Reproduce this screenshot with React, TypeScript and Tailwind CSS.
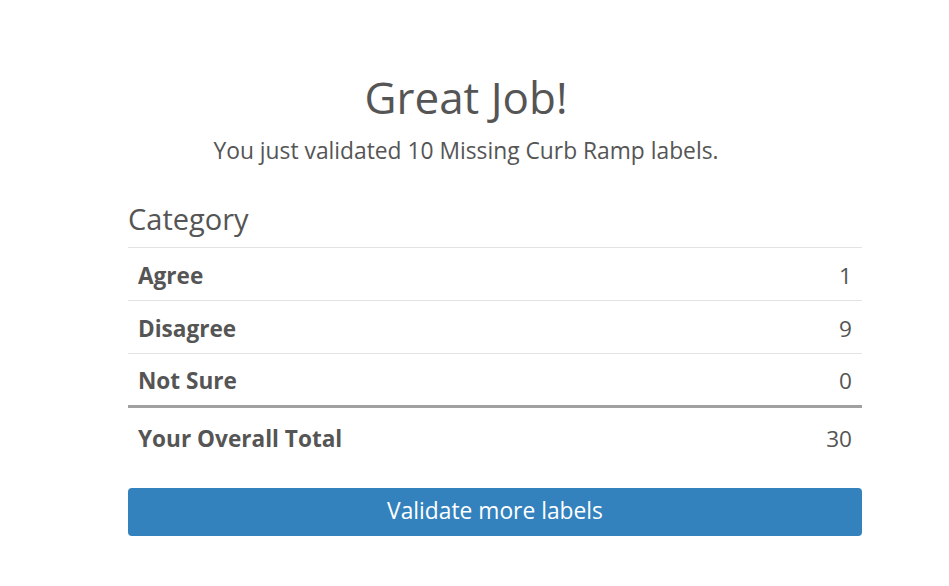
export default function App() {
  const rows = [
    { label: "Agree", value: 1 },
    { label: "Disagree", value: 9 },
    { label: "Not Sure", value: 0 },
  ];

  return (
    <main
      className="min-h-screen bg-white text-[#555]"
      style={{ fontFamily: '"Open Sans", sans-serif' }}
    >
      <div className="w-[932px] pt-[69px] text-center">
        <h1 className="text-[44px] leading-[56px]">Great Job!</h1>
        <p className="mt-[11px] text-[22.8px] leading-[30px]">
          You just validated 10 Missing Curb Ramp labels.
        </p>
      </div>
      <div className="ml-[128px] w-[734px] mt-[34px]">
        <h3 className="text-[29px] leading-[38px] pb-[9px] text-[#555]">
          Category
        </h3>
        <table className="w-full border-collapse">
          <tbody>
            {rows.map((r, i) => (
              <tr
                key={r.label}
                className={
                  i === rows.length - 1
                    ? "border-t border-[#e3e3e3] border-b-[3px] border-b-[#a0a0a0]"
                    : "border-t border-[#e3e3e3]"
                }
              >
                <td className="h-[53px] px-[10px] pt-[3px] text-[22.6px] font-bold">
                  {r.label}
                </td>
                <td className="h-[53px] px-[10px] pt-[3px] text-right text-[22.6px]">
                  {r.value}
                </td>
              </tr>
            ))}
            <tr>
              <td className="h-[59px] px-[10px] pt-[4px] text-[22.6px] font-bold">
                Your Overall Total
              </td>
              <td className="h-[59px] px-[10px] pt-[4px] text-right text-[22.6px]">30</td>
            </tr>
          </tbody>
        </table>
        <button className="mt-[22px] w-full h-[48px] rounded-[4px] bg-[#3382be] text-white text-[22.8px]">
          Validate more labels
        </button>
      </div>
    </main>
  );
}
